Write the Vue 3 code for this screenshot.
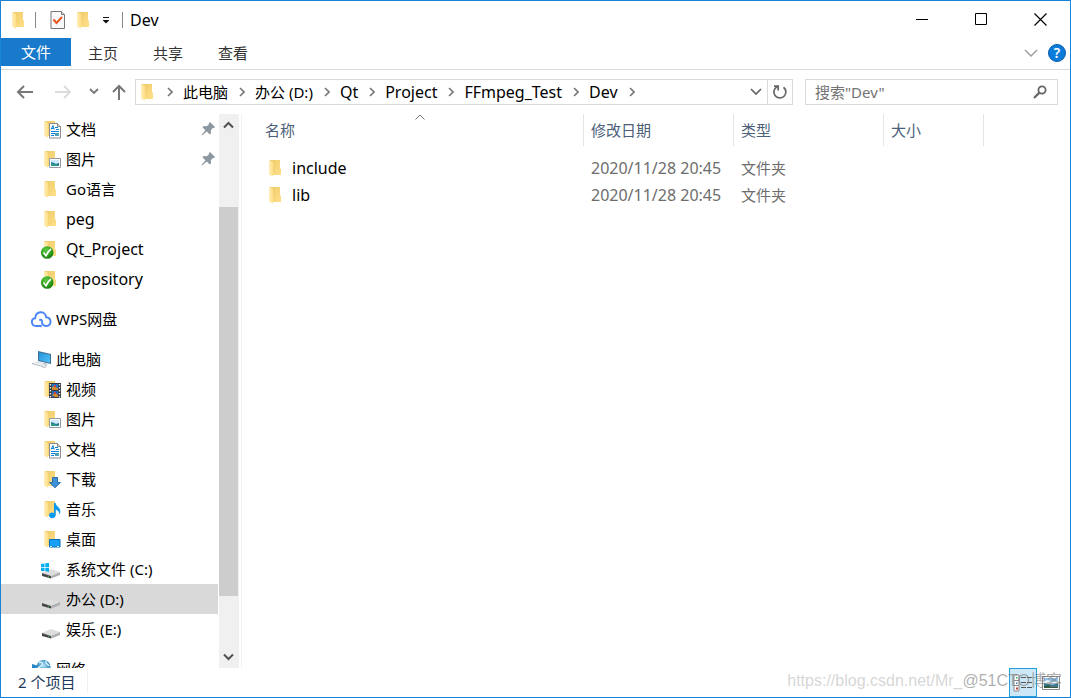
<script setup>
import { ref } from 'vue'

const menus = ['主页', '共享', '查看']
const crumbs = ['此电脑', '办公 (D:)', 'Qt', 'Project', 'FFmpeg_Test', 'Dev']
const groups = [
  [
    { name: '文档', icon: 'document', pinned: true },
    { name: '图片', icon: 'picture', pinned: true },
    { name: 'Go语言', icon: 'folder' },
    { name: 'peg', icon: 'folder' },
    { name: 'Qt_Project', icon: 'synced' },
    { name: 'repository', icon: 'synced' }
  ],
  [{ name: 'WPS网盘', icon: 'cloud', root: true }],
  [
    { name: '此电脑', icon: 'computer', root: true },
    { name: '视频', icon: 'video' },
    { name: '图片', icon: 'picture' },
    { name: '文档', icon: 'document' },
    { name: '下载', icon: 'download' },
    { name: '音乐', icon: 'music' },
    { name: '桌面', icon: 'desktop' },
    { name: '系统文件 (C:)', icon: 'system-drive' },
    { name: '办公 (D:)', icon: 'drive' },
    { name: '娱乐 (E:)', icon: 'drive' }
  ],
  [{ name: '网络', icon: 'network', root: true }]
]
const files = [
  { name: 'include', date: '2020/11/28 20:45', type: '文件夹' },
  { name: 'lib', date: '2020/11/28 20:45', type: '文件夹' }
]
const selected = ref('办公 (D:)')
const query = ref('')
const isLatin = (text) => /^[\x20-\x7e]+$/.test(text)
</script>

<template>
  <div class="window">
    <svg class="defs" aria-hidden="true">
      <defs>
        <linearGradient id="g-body" x1="0" x2="1" y1="0" y2="1">
          <stop offset="0" stop-color="#eecb69" />
          <stop offset="1" stop-color="#ffe08a" />
        </linearGradient>
        <linearGradient id="g-flap" x1="0" x2="1">
          <stop offset="0" stop-color="#ffeeb8" />
          <stop offset="1" stop-color="#ffdf8a" />
        </linearGradient>
        <linearGradient id="g-screen" x1="0" x2="1" y1="0" y2="1">
          <stop offset="0" stop-color="#2490dc" />
          <stop offset="1" stop-color="#55c3f8" />
        </linearGradient>
        <radialGradient id="g-green" cx=".4" cy=".3" r=".8">
          <stop offset="0" stop-color="#5fca45" />
          <stop offset=".6" stop-color="#2c9b1b" />
          <stop offset="1" stop-color="#14700e" />
        </radialGradient>
        <radialGradient id="g-globe" cx=".5" cy=".4" r=".7">
          <stop offset="0" stop-color="#b5e1f5" />
          <stop offset=".5" stop-color="#4d9fce" />
          <stop offset="1" stop-color="#246c9d" />
        </radialGradient>
      </defs>
      <symbol id="i-folder" viewBox="0 0 22 20">
        <path d="M5 2h10v8l1 1v6H8L5 15z" fill="url(#g-body)" />
        <path d="M4 2l4 2v14.500l-4-2z" fill="url(#g-flap)" />
      </symbol>
      <symbol id="i-document" viewBox="0 0 22 20">
        <use href="#i-folder" width="22" height="20" />
        <path d="M9.500 4.500h8l3 3v11.500h-11z" fill="#fff" stroke="#8a8a8a" />
        <path d="M17.500 4.500v3h3" fill="#ddd" stroke="#8a8a8a" />
        <path d="M11 10.500l2-4 1.200 4M12 9.500h2M15 8.500h3M11 12.500h8M11 14.500h4M11 16.500h3M16 10.500h3" fill="none" stroke="#1583d2" />
        <path d="M15 14h4v3h-4z" fill="#4aa3b5" />
      </symbol>
      <symbol id="i-picture" viewBox="0 0 22 20">
        <use href="#i-folder" width="22" height="20" />
        <path d="M9.500 9.500h11v9h-11z" fill="#fff" stroke="#929ba1" />
        <path d="M11 11h8v6h-8z" fill="#cde9fb" />
        <path d="M11 13l3 1 2 1 3-1v3h-8z" fill="#1d6c9a" />
        <path d="M11 14l3 1 5 1v1h-8z" fill="#2b9a86" />
      </symbol>
      <symbol id="i-synced" viewBox="0 0 22 20">
        <path d="M4 2h11v8l1 1v6H8L4 15z" fill="url(#g-body)" />
        <path d="M4 2l4 2v14l-4-2z" fill="url(#g-flap)" />
        <circle cx="7.200" cy="13.500" r="6.300" fill="url(#g-green)" />
        <path d="M3.500 13.500l2.500 3.200C7.500 13.500 9 11.500 11 10" fill="none" stroke="#fff" stroke-width="1.700" />
      </symbol>
      <symbol id="i-cloud" viewBox="0 0 22 20">
        <path d="M11 17H6C0.800 17 .500 9.700 5.200 9.300C5.500 1.500 15.500 1.200 16.200 8.300C21.800 8.500 22 17 16.500 17C13 17 11.700 14.800 12 12.500C12.200 11.200 11.200 10.500 10 11" fill="none" stroke="#4b86f5" stroke-width="1.900" stroke-linecap="round" />
      </symbol>
      <symbol id="i-computer" viewBox="0 0 22 20">
        <path d="M8 2l13 3v10l-13-3z" fill="#3d6e93" />
        <path d="M9 3.300l11 2.500v7.900L9 11.200z" fill="url(#g-screen)" />
        <path d="M14 14l3 .7v2l-5-1z" fill="#a5adb5" />
        <path d="M2 14l5-1.500 10 3-4 1.500z" fill="#d4dae0" />
        <path d="M2 14l11 3v1L2 15z" fill="#a5b1bb" />
        <path d="M12 18.200l3-1 2 .8-3 1.200z" fill="#c0c7ce" />
        <path d="M5 13.500l9 2.500M3.500 14l9 2.500" stroke="#fff" stroke-width=".6" />
      </symbol>
      <symbol id="i-video" viewBox="0 0 22 20">
        <use href="#i-folder" width="22" height="20" />
        <path d="M9 4h12v15H9z" fill="#333940" />
        <path d="M12 5h6v6h-6z" fill="#2575ca" />
        <path d="M12 12h6v6h-6z" fill="#2867ba" />
        <path d="M12 8.500l2-1.500 4 2.500v1.500h-6zM12 16l3 2h3v-2l-3-2z" fill="#d68a27" />
        <path d="M14 6h2v2h-2zM14 13h2v2h-2z" fill="#c8433c" />
        <path d="M10.500 5v14M19.500 5v14" stroke="#e9eff3" stroke-width="1.400" stroke-dasharray="1.400 1.600" />
      </symbol>
      <symbol id="i-download" viewBox="0 0 22 20">
        <use href="#i-folder" width="22" height="20" />
        <path d="M12.500 8.500h5v5h3L15 18.700l-5.500-5.200h3z" fill="#3e91d8" stroke="#2b6fae" />
      </symbol>
      <symbol id="i-music" viewBox="0 0 22 20">
        <use href="#i-folder" width="22" height="20" />
        <path d="M14 4h1.700c.2 3.500 4.600 4 4.600 8.300 0 1.700-.7 2.700-1.300 3.400.5-2.500-.4-4.300-3.300-5V16c0 2-1.500 3.200-3.500 3.200S9 18 9 16.300s1.500-2.800 3-2.800c.8 0 1.500.2 2 .5z" fill="#0c99f0" />
      </symbol>
      <symbol id="i-desktop" viewBox="0 0 22 20">
        <use href="#i-folder" width="22" height="20" />
        <path d="M9.500 10.500h10.500v7.500H9.500z" fill="#18a0f8" stroke="#096eb7" />
        <path d="M10 17.500h2M17 17.500h2" stroke="#d4f0ff" />
      </symbol>
      <symbol id="i-drive" viewBox="0 0 22 20">
        <path d="M2 14l9-4 9 3-9 4z" fill="#dedede" />
        <path d="M11 17l9-4v3l-9 3.500z" fill="#b0b0b0" />
        <path d="M2 14l9 3v2.500L2 17z" fill="#454849" />
        <path d="M8 17.200l1 .3v1L8 18.200z" fill="#4ec052" />
      </symbol>
      <symbol id="i-system-drive" viewBox="0 0 22 20">
        <use href="#i-drive" width="22" height="20" />
        <path d="M1 5l3.500-.5V8H1zM5.300 4.300L9 4v4H5.300zM1 8.800h3.500v3.400L1 11.800zM5.300 8.800H9v4l-3.700-.5z" fill="#00adef" />
      </symbol>
      <symbol id="i-network" viewBox="0 0 22 20">
        <path d="M2 5l7 2v5l-7-1z" fill="#2588c6" />
        <circle cx="13.500" cy="8" r="7" fill="url(#g-globe)" />
        <path d="M9 4c3-2 4 0 3 2s-3 2-4 3M16 2c-1 3 2 3 3 5" fill="none" stroke="#e8f7fd" stroke-width="1.200" />
      </symbol>
    </svg>

    <header class="titlebar">
      <svg class="icon" aria-hidden="true"><use href="#i-folder" /></svg>
      <i class="divider first"></i>
      <button class="quick" aria-label="属性">
        <svg width="16" height="20" viewBox="0 0 16 20">
          <path d="M1 1.500h10.500l3 3V18.500H1z" fill="#f7f8fa" stroke="#777" />
          <path d="M11.500 1.500v3h3" fill="#ddd" stroke="#777" />
          <path d="M3.500 9.500l3 3.500 5.500-6" fill="none" stroke="#e95420" stroke-width="2" />
        </svg>
      </button>
      <button class="quick" aria-label="新建文件夹"><svg class="icon" aria-hidden="true"><use href="#i-folder" /></svg></button>
      <button class="quick more" aria-label="自定义快速访问工具栏">
        <svg width="8" height="8" viewBox="0 0 8 8"><path d="M1 1.500h6" stroke="#111" /><path d="M.5 4h7L4 7.500z" fill="#111" /></svg>
      </button>
      <i class="divider"></i>
      <h1 class="latin">Dev</h1>
      <div class="controls">
        <button aria-label="最小化"><svg width="13" height="13"><path d="M0 6.500h12" stroke="#000" /></svg></button>
        <button aria-label="最大化"><svg width="13" height="13"><path d="M.5 .5h11v11H.5z" fill="none" stroke="#000" /></svg></button>
        <button aria-label="关闭"><svg width="13" height="13"><path d="M.5 .5l12 12M12.500 .5l-12 12" stroke="#000" stroke-width="1.200" /></svg></button>
      </div>
    </header>

    <nav class="ribbon" aria-label="功能区">
      <button class="file">文件</button>
      <button v-for="m in menus" :key="m" class="menu">{{ m }}</button>
      <button class="expand" aria-label="展开功能区"><svg width="14" height="8" viewBox="0 0 14 8"><path d="M1 1l6 6 6-6" fill="none" stroke="#9a9a9a" stroke-width="1.400" /></svg></button>
      <button class="help" aria-label="帮助">?</button>
    </nav>

    <div class="address-row">
      <button class="nav" aria-label="后退"><svg width="18" height="16" viewBox="0 0 18 16"><path d="M17 8H2M8 2L2 8l6 6" fill="none" stroke="#777" stroke-width="2" /></svg></button>
      <button class="nav forward" aria-label="前进"><svg width="18" height="16" viewBox="0 0 18 16"><path d="M1 8h15M10 2l6 6-6 6" fill="none" stroke="#dcdcdc" stroke-width="2" /></svg></button>
      <button class="nav recent" aria-label="最近位置"><svg width="10" height="7" viewBox="0 0 10 7"><path d="M1 1l4 4 4-4" fill="none" stroke="#777" stroke-width="1.800" /></svg></button>
      <button class="nav up" aria-label="上移"><svg width="16" height="16" viewBox="0 0 16 16"><path d="M8 16V2M2 8l6-6 6 6" fill="none" stroke="#777" stroke-width="2" /></svg></button>
      <div class="address">
        <svg class="icon" aria-hidden="true"><use href="#i-folder" /></svg>
        <svg class="chevron" viewBox="0 0 6 10"><path d="M1 1l4 4-4 4" /></svg>
        <template v-for="c in crumbs" :key="c">
          <button class="crumb" :class="{ latin: isLatin(c) }">{{ c }}</button>
          <svg class="chevron" viewBox="0 0 6 10"><path d="M1 1l4 4-4 4" /></svg>
        </template>
        <button class="history" aria-label="以前的位置"><svg width="12" height="8" viewBox="0 0 12 8"><path d="M1 1l5 5 5-5" fill="none" stroke="#666" stroke-width="1.700" /></svg></button>
        <button class="refresh" aria-label="刷新"><svg width="16" height="16" viewBox="0 0 16 16"><path d="M11.500 3.200A6 6 0 1 1 5 2.700M2 2.200h4.200v4.300" fill="none" stroke="#666" stroke-width="1.700" /></svg></button>
      </div>
      <label class="search">
        <input v-model="query" type="text" aria-label="搜索" placeholder='搜索"Dev"' />
        <svg width="14" height="14" viewBox="0 0 14 14"><circle cx="9" cy="5" r="3.600" fill="none" stroke="#666" stroke-width="1.800" /><path d="M6.400 7.600L1 13" stroke="#666" stroke-width="2.200" /></svg>
      </label>
    </div>

    <main class="main">
      <aside class="sidebar">
        <nav class="tree" aria-label="导航窗格">
          <div v-for="(group, gi) in groups" :key="gi" class="group">
            <button
              v-for="item in group"
              :key="item.name"
              class="node"
              :class="{ root: item.root, selected: item.name === selected }"
              @click="selected = item.name"
            >
              <svg class="icon" aria-hidden="true"><use :href="'#i-' + item.icon" /></svg>
              <span :class="{ latin: isLatin(item.name) }">{{ item.name }}</span>
              <svg v-if="item.pinned" class="pin" viewBox="0 0 14 14">
                <path d="M9 0l5 5-1.200 1.200-1-.2-2 2.200.2 3L8.800 12.500 5.800 9.600 1 13.500l-.500-.500L4.400 8.200 1.500 5.200 2.800 4l3 .2L8 2.200 7.800 1.200z" fill="#8c979f" />
              </svg>
            </button>
          </div>
        </nav>
        <div class="scrollbar">
          <button aria-label="向上滚动"><svg width="11" height="8" viewBox="0 0 11 8"><path d="M1 6.500l4.500-4.500L10 6.500" fill="none" stroke="#505050" stroke-width="2" /></svg></button>
          <div class="track"><div class="thumb"></div></div>
          <button aria-label="向下滚动"><svg width="11" height="8" viewBox="0 0 11 8"><path d="M1 1.500L5.500 6 10 1.500" fill="none" stroke="#505050" stroke-width="2" /></svg></button>
        </div>
      </aside>
      <section class="content">
        <table>
          <thead>
            <tr>
              <th class="name">名称<svg class="sort" viewBox="0 0 10 6"><path d="M.5 5.500L5 1l4.500 4.500" fill="none" stroke="#777" /></svg></th>
              <th class="date">修改日期</th>
              <th class="date">类型</th>
              <th class="size">大小</th>
            </tr>
          </thead>
          <tbody>
            <tr v-for="f in files" :key="f.name">
              <td class="name"><a href="#" class="latin"><svg class="icon" aria-hidden="true"><use href="#i-folder" /></svg>{{ f.name }}</a></td>
              <td class="latin">{{ f.date }}</td>
              <td>{{ f.type }}</td>
              <td></td>
            </tr>
          </tbody>
        </table>
      </section>
    </main>

    <footer class="status">
      <span class="count">2 个项目</span>
      <button class="view active" aria-label="详细信息">
        <svg width="20" height="18" viewBox="0 0 20 18">
          <path d="M1 1h5v16H1z" fill="#fff" stroke="#8b8b8b" />
          <path d="M1 6.500h5M1 11.500h5" stroke="#8b8b8b" />
          <path d="M3 3h1.500v1.500H3z" fill="#3a7" /><path d="M3 8.500h1.500V10H3z" fill="#47b" /><path d="M3 13.500h2v2H3z" fill="#b43" />
          <path d="M8 3.500h5M14 3.500h5M8 8.500h5M14 8.500h5M8 13.500h5M14 13.500h5" stroke="#555" />
        </svg>
      </button>
      <button class="view" aria-label="大图标">
        <svg width="18" height="14" viewBox="0 0 18 14">
          <path d="M.5 .5h17v13H.5z" fill="#fff" stroke="#888" />
          <path d="M2 2h14v10H2z" fill="#8dc3ee" />
          <path d="M2 5l4-1 4 2 6-1v3H2z" fill="#e9f4fb" />
          <path d="M2 7l5 1 4 1 5-2v5H2z" fill="#347894" />
          <path d="M2 10l5-1 4 2 5-1v2H2z" fill="#315b45" />
        </svg>
      </button>
      <div class="watermark"><span>https://blog.csdn.net/Mr_</span><b>@51CTO博客</b></div>
    </footer>
  </div>
</template>

<style>
html, body { margin: 0; background: #fff; }
</style>

<style scoped>
* { box-sizing: border-box; }
.window {
  position: relative;
  display: flex;
  flex-direction: column;
  height: 100vh;
  border: 1px solid #1883d7;
  background: #fff;
  color: #000;
  font-family: "Noto Sans", "Noto Sans CJK SC", sans-serif;
  font-size: 15px;
  line-height: 20px;
  overflow: hidden;
}
button, input { margin: 0; padding: 0; border: 0; background: none; color: inherit; font: inherit; }
svg { display: block; flex: none; }
.defs { position: absolute; width: 0; height: 0; }
.icon { width: 22px; height: 20px; }
.latin { font-size: 16px; }

.titlebar { display: flex; align-items: center; height: 37px; flex: none; padding-left: 7px; }
.divider { width: 1px; height: 16px; background: #888; }
.divider.first { margin: 0 14px 0 5px; }
.quick { display: flex; }
.quick + .quick { margin-left: 7px; }
.quick.more { margin: 0 12px 0 7px; }
.titlebar h1 { margin: 0 0 0 7px; font-weight: 400; }
.controls { display: flex; gap: 1px; margin-left: auto; padding-right: 1px; }
.controls button { display: flex; width: 58px; height: 36px; align-items: center; justify-content: center; }

.ribbon { display: flex; align-items: center; flex: none; height: 32px; padding-bottom: 1px; border-bottom: 1px solid #dadbdc; color: #333; }
.ribbon .file { align-self: flex-start; width: 70px; height: 28px; margin-right: 17px; background: #1979ca; color: #fff; }
.menu { margin-right: 35px; }
.expand { margin-left: auto; }
.help { width: 18px; height: 18px; margin: 0 4px 0 10px; border: 1px solid #0a5eae; border-radius: 50%; background: #0c7cdb; color: #fff; font-size: 14px; font-weight: 600; line-height: 16px; }

.address-row { display: flex; align-items: center; flex: none; height: 43px; padding: 0 12px 0 15px; }
.nav.forward { margin-left: 20px; }
.nav.recent { margin-left: 17px; }
.nav.up { margin: 0 8px 0 12px; }
.address { display: flex; flex: 1; align-items: center; height: 26px; padding-left: 1px; border: 1px solid #d9d9d9; }
.chevron { width: 6px; height: 10px; margin: 0 10px 0 11px; fill: none; stroke: #777; stroke-width: 1.600; }
.address .icon + .chevron { margin-left: 8px; }
.crumb { white-space: nowrap; }
.history { margin: 0 5px 0 auto; }
.refresh { display: flex; align-items: center; justify-content: center; width: 25px; height: 24px; border-left: 1px solid #d9d9d9; }
.search { display: flex; align-items: center; width: 253px; height: 26px; margin-left: 12px; padding: 0 10px 0 9px; border: 1px solid #d9d9d9; }
.search input { flex: 1; min-width: 0; outline: 0; }
.search input::placeholder { color: #737373; opacity: 1; }

.main { display: flex; flex: 1; min-height: 0; padding-top: 1px; }
.sidebar { display: flex; width: 241px; border-right: 1px solid #f2f2f2; }
.tree { width: 217px; margin-right: 1px; overflow: hidden; }
.group + .group { margin-top: 10px; }
.node { display: flex; align-items: center; gap: 4px; width: 100%; height: 30px; padding-left: 39px; white-space: nowrap; text-align: left; }
.node.root { padding-left: 29px; }
.node.selected { background: #d9d9d9; }
.pin { width: 14px; height: 14px; margin: 0 3px 0 auto; }
.scrollbar { display: flex; flex-direction: column; width: 20px; background: #f0f0f0; }
.scrollbar button { display: flex; align-items: center; justify-content: center; width: 19px; height: 22px; }
.track { display: flex; flex: 1; flex-direction: column; min-height: 0; padding: 71px 0 50px; }
.thumb { flex: 1; width: 19px; background: #cdcdcd; }

.content { flex: 1; }
table { table-layout: fixed; width: 742px; border-collapse: separate; border-spacing: 0; }
th { position: relative; height: 32px; padding: 0 0 0 7px; border-right: 1px solid #e5e5e5; color: #4c607a; font-weight: 400; text-align: left; }
th.name { width: 342px; padding-left: 23px; }
th.date { width: 150px; }
th.size { width: 100px; }
.sort { position: absolute; top: 0; left: 173px; width: 10px; height: 6px; }
thead::after { content: ""; display: block; height: 8px; }
td { height: 27px; padding: 0 0 0 7px; color: #6d6d6d; }
td.name { padding-left: 23px; }
td a { display: flex; align-items: center; gap: 5px; color: #000; text-decoration: none; }

.status { position: relative; display: flex; align-items: center; flex: none; height: 29px; padding-right: 5px; color: #1e395b; }
.count { margin: 0 auto 2px 0; padding: 0 12px 0 17px; border-right: 1px solid #f0f0f0; }
.view { display: flex; align-items: center; justify-content: center; width: 28px; height: 29px; }
.view.active { border: 1px solid #26a0da; background: #cce8f6; }
.watermark { position: absolute; right: 8px; top: 3px; display: flex; font-family: "Liberation Sans", "Noto Sans CJK SC", sans-serif; font-size: 16px; line-height: 20px; color: rgba(150, 150, 150, 0.4); white-space: nowrap; pointer-events: none; }
.watermark b { color: rgba(120, 120, 120, 0.6); font-weight: 400; }
</style>
